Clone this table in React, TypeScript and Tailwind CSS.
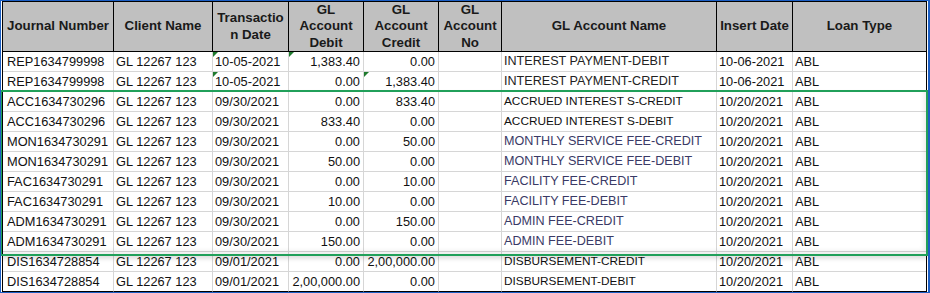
const cols = "grid grid-cols-[111px_99px_76px_75px_75px_63px_215px_76px_133px]";

const headers = [
  ["Journal Number"],
  ["Client Name"],
  ["Transactio", "n Date"],
  ["GL", "Account", "Debit"],
  ["GL", "Account", "Credit"],
  ["GL", "Account", "No"],
  ["GL Account Name"],
  ["Insert Date"],
  ["Loan Type"],
];

type Row = {
  jn: string;
  date: string;
  debit: string;
  credit: string;
  name: string;
  insert: string;
  nameStyle: "arial" | "calibri" | "slate";
  marks?: number[];
};

const rows: Row[] = [
  { jn: "REP1634799998", date: "10-05-2021", debit: "1,383.40", credit: "0.00", name: "INTEREST PAYMENT-DEBIT", insert: "10-06-2021", nameStyle: "arial", marks: [2, 3] },
  { jn: "REP1634799998", date: "10-05-2021", debit: "0.00", credit: "1,383.40", name: "INTEREST PAYMENT-CREDIT", insert: "10-06-2021", nameStyle: "arial", marks: [2, 4] },
  { jn: "ACC1634730296", date: "09/30/2021", debit: "0.00", credit: "833.40", name: "ACCRUED INTEREST S-CREDIT", insert: "10/20/2021", nameStyle: "calibri" },
  { jn: "ACC1634730296", date: "09/30/2021", debit: "833.40", credit: "0.00", name: "ACCRUED INTEREST S-DEBIT", insert: "10/20/2021", nameStyle: "calibri" },
  { jn: "MON1634730291", date: "09/30/2021", debit: "0.00", credit: "50.00", name: "MONTHLY SERVICE FEE-CREDIT", insert: "10/20/2021", nameStyle: "slate" },
  { jn: "MON1634730291", date: "09/30/2021", debit: "50.00", credit: "0.00", name: "MONTHLY SERVICE FEE-DEBIT", insert: "10/20/2021", nameStyle: "slate" },
  { jn: "FAC1634730291", date: "09/30/2021", debit: "0.00", credit: "10.00", name: "FACILITY FEE-CREDIT", insert: "10/20/2021", nameStyle: "slate" },
  { jn: "FAC1634730291", date: "09/30/2021", debit: "10.00", credit: "0.00", name: "FACILITY FEE-DEBIT", insert: "10/20/2021", nameStyle: "slate" },
  { jn: "ADM1634730291", date: "09/30/2021", debit: "0.00", credit: "150.00", name: "ADMIN FEE-CREDIT", insert: "10/20/2021", nameStyle: "slate" },
  { jn: "ADM1634730291", date: "09/30/2021", debit: "150.00", credit: "0.00", name: "ADMIN FEE-DEBIT", insert: "10/20/2021", nameStyle: "slate" },
  { jn: "DIS1634728854", date: "09/01/2021", debit: "0.00", credit: "2,00,000.00", name: "DISBURSEMENT-CREDIT", insert: "10/20/2021", nameStyle: "calibri" },
  { jn: "DIS1634728854", date: "09/01/2021", debit: "2,00,000.00", credit: "0.00", name: "DISBURSEMENT-DEBIT", insert: "10/20/2021", nameStyle: "calibri" },
];

const nameClass = {
  arial: "text-[12.6px] text-[#222222]",
  calibri: "text-[11.8px] text-[#111111]",
  slate: "text-[12.6px] text-[#3a3a66]",
};

function Mark() {
  return (
    <span className="absolute left-0 top-0 h-0 w-0 border-r-[5px] border-t-[5px] border-r-transparent border-t-[#1f7a2e]" />
  );
}

export default function App() {
  return (
    <div className="relative h-[293px] w-[930px] overflow-hidden border-y border-l border-r-2 border-[#1c5fc4] bg-white px-px font-['Liberation_Sans',Arial,sans-serif]">
      <div className="border-x border-t border-black">
        <div className={`${cols} bg-[#c0c0c0]`}>
          {headers.map((lines, i) => (
            <div
              key={i}
              className={`flex h-[50px] flex-col items-center justify-center overflow-hidden border-b border-black text-center text-[13.3px] font-bold leading-[16.5px] text-[#1a1a1a] ${
                i < headers.length - 1 ? "border-r" : ""
              }`}
            >
              {lines.map((l) => (
                <span key={l} className="whitespace-nowrap">
                  {l}
                </span>
              ))}
            </div>
          ))}
        </div>

        {rows.map((r, ri) => {
          const last = ri === rows.length - 1;
          const cell = `relative flex h-5 items-center whitespace-nowrap border-b text-[12.8px] text-[#111111] ${
            last ? "border-b-black" : "border-b-[#d6d6d6]"
          }`;
          const sep = "border-r border-r-[#d6d6d6]";
          const has = (n: number) => r.marks?.includes(n);
          return (
            <div key={ri} className={cols}>
              <div className={`${cell} ${sep} pl-1`}>{r.jn}</div>
              <div className={`${cell} ${sep} pl-[2px]`}>GL 12267 123</div>
              <div className={`${cell} ${sep} pl-[2px]`}>
                {has(2) && <Mark />}
                {r.date}
              </div>
              <div className={`${cell} ${sep} justify-end pr-[3px]`}>
                {has(3) && <Mark />}
                {r.debit}
              </div>
              <div className={`${cell} ${sep} justify-end pr-[3px]`}>
                {has(4) && <Mark />}
                {r.credit}
              </div>
              <div className={`${cell} ${sep}`} />
              <div className={`${cell} ${sep} pl-[2px]`}>
                <span className={nameClass[r.nameStyle]}>{r.name}</span>
              </div>
              <div className={`${cell} ${sep} pl-[2px]`}>{r.insert}</div>
              <div className={`${cell} pl-[2px]`}>ABL</div>
            </div>
          );
        })}
      </div>

      <div className="pointer-events-none absolute -left-px top-[89px] h-[166px] w-[928px] border-2 border-[#21a05a] shadow-[0_3px_4px_rgba(0,0,0,0.12),inset_-2px_-3px_5px_rgba(0,0,0,0.08)]" />
    </div>
  );
}
